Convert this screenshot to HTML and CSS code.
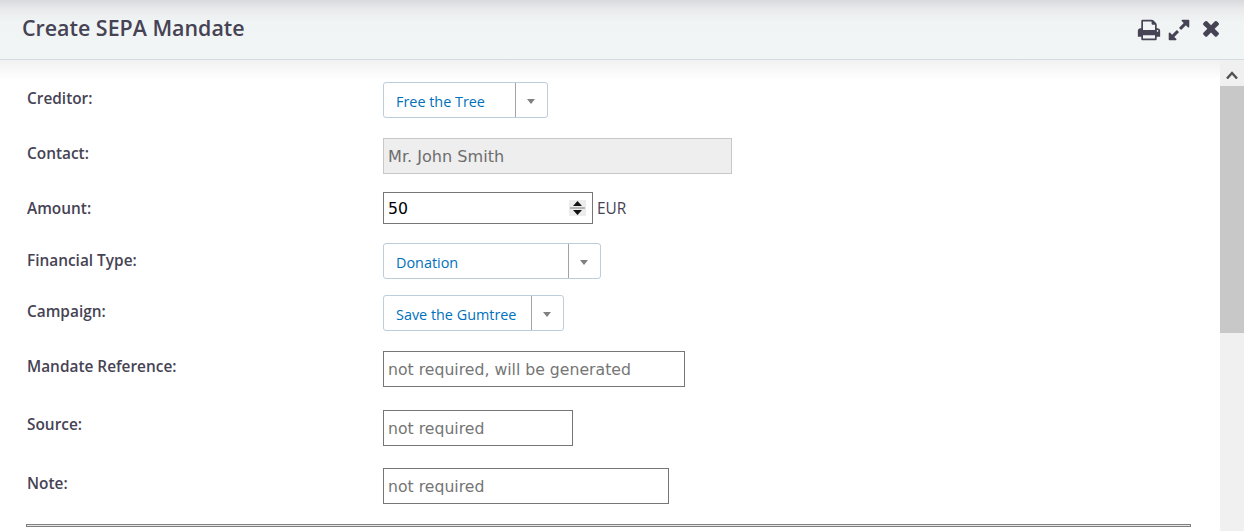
FILE: index.html
```html
<!DOCTYPE html>
<html lang="en">

<head>
    <title>Create SEPA Mandate</title>
    <meta charset="UTF-8">
    <link rel="stylesheet" href="styles.css">
</head>

<body>
    <header class="dialog-header">
        <h1>Create SEPA Mandate</h1>
        <div class="dialog-icons">
            <svg class="icon-print" viewBox="0 0 1792 1792"><path d="M448 1536h896v-256h-896v256zm0-640h896v-384h-160q-40 0-68-28t-28-68v-160h-640v640zm1152 64q0-26-19-45t-45-19-45 19-19 45 19 45 45 19 45-19 19-45zm128 0v416q0 13-9.500 22.500t-22.500 9.500h-224v160q0 40-28 68t-68 28h-960q-40 0-68-28t-28-68v-160h-224q-13 0-22.500-9.500t-9.500-22.500v-416q0-79 56.500-135.500t135.500-56.500h64v-544q0-40 28-68t68-28h672q40 0 88 20t76 48l152 152q28 28 48 76t20 88v256h64q79 0 135.500 56.500t56.500 135.500z"/></svg>
            <svg class="icon-expand" viewBox="0 0 1792 1792"><path d="M883 1056q0 13-10 23l-332 332 144 144q19 19 19 45t-19 45-45 19h-448q-26 0-45-19t-19-45v-448q0-26 19-45t45-19 45 19l144 144 332-332q10-10 23-10t23 10l114 114q10 10 10 23zm781-864v448q0 26-19 45t-45 19-45-19l-144-144-332 332q-10 10-23 10t-23-10l-114-114q-10-10-10-23t10-23l332-332-144-144q-19-19-19-45t19-45 45-19h448q26 0 45 19t19 45z"/></svg>
            <svg class="icon-close" viewBox="0 0 1792 1792"><path d="M1490 1322q0 40-28 68l-136 136q-28 28-68 28t-68-28l-294-294-294 294q-28 28-68 28t-68-28l-136-136q-28-28-28-68t28-68l294-294-294-294q-28-28-28-68t28-68l136-136q28-28 68-28t68 28l294 294 294-294q28-28 68-28t68 28l136 136q28 28 28 68t-28 68l-294 294 294 294q28 28 28 68z"/></svg>
        </div>
    </header>

    <main class="dialog-body">
        <form class="mandate-form">
            <div class="row row-creditor">
                <label>Creditor:</label>
                <div class="select select-creditor"><span>Free the Tree</span><b></b></div>
            </div>
            <div class="row row-contact">
                <label>Contact:</label>
                <input class="text-input input-contact" type="text" value="Mr. John Smith" disabled>
            </div>
            <div class="row row-amount">
                <label>Amount:</label>
                <div class="amount-box">
                    <input class="text-input input-amount" type="number" value="50">
                    <svg class="spinner" viewBox="0 0 17 16">
                        <rect width="17" height="16" fill="#ececec"/>
                        <rect x="1" y="7" width="15" height="2" fill="#b4b4b4"/>
                        <path d="M8.500 1 L13 6 H4 Z M8.500 15 L13 10 H4 Z" fill="#111111"/>
                    </svg>
                </div>
                <span class="currency">EUR</span>
            </div>
            <div class="row row-type">
                <label>Financial Type:</label>
                <div class="select select-type"><span>Donation</span><b></b></div>
            </div>
            <div class="row row-campaign">
                <label>Campaign:</label>
                <div class="select select-campaign"><span>Save the Gumtree</span><b></b></div>
            </div>
            <div class="row row-reference">
                <label>Mandate Reference:</label>
                <input class="text-input input-reference" type="text" placeholder="not required, will be generated">
            </div>
            <div class="row row-source">
                <label>Source:</label>
                <input class="text-input input-source" type="text" placeholder="not required">
            </div>
            <div class="row row-note">
                <label>Note:</label>
                <input class="text-input input-note" type="text" placeholder="not required">
            </div>
            <hr class="divider">
        </form>

        <div class="scrollbar">
            <div class="scroll-up">
                <svg viewBox="0 0 12 8"><path d="M1 7.500 L6 2 L11 7.500" fill="none" stroke="#505050" stroke-width="2.400"/></svg>
            </div>
            <div class="scroll-thumb"></div>
        </div>
    </main>
</body>

</html>
```

FILE: styles.css
```css
* {
    box-sizing: border-box;
}

html,
body {
    height: 100%;
}

body {
    margin: 0;
    overflow: hidden;
    display: flex;
    flex-direction: column;
    font-family: "Open Sans", Arial, sans-serif;
    font-size: 15.4px;
    color: #464354;
    background-color: white;
}

.dialog-header {
    height: 60px;
    flex: none;
    display: flex;
    justify-content: space-between;
    padding: 14px 21px 0 22px;
    border-bottom: 1px solid #d3dae0;
    background: linear-gradient(#d9dadd, #e9ebed 10px, #f1f4f5 22px, #f2f5f6);
}

.dialog-header h1 {
    margin: 0;
    font-size: 21.4px;
    line-height: 28px;
    font-weight: 600;
}

.dialog-icons {
    display: flex;
    fill: #464354;
}

.dialog-icons svg {
    display: block;
}

.icon-print {
    width: 24px;
    height: 24px;
    margin-top: 4px;
}

.icon-expand {
    width: 24px;
    height: 24px;
    margin: 4px 0 0 6px;
}

.icon-close {
    width: 24px;
    height: 24px;
    margin: 2px 0 0 8px;
}

.dialog-body {
    flex: 1;
    min-height: 0;
    display: flex;
    background: linear-gradient(#f1f1f1, white 20px);
}

.mandate-form {
    flex: 1;
    padding: 22px 29px 0 26px;
}

.row {
    display: flex;
}

.row label {
    width: 357px;
    flex: none;
    padding-left: 1px;
    font-weight: 600;
    line-height: 20px;
}

.row-contact {
    margin-top: 20px;
}

.row-amount {
    margin-top: 18px;
}

.row-type {
    margin-top: 19px;
}

.row-campaign {
    margin-top: 16px;
}

.row-reference {
    margin-top: 20px;
}

.row-source {
    margin-top: 23px;
}

.row-note {
    margin-top: 22px;
}

.row-creditor label,
.row-amount label,
.row-campaign label {
    padding-top: 7px;
}

.row-contact label,
.row-reference label,
.row-note label {
    padding-top: 6px;
}

.row-source label {
    padding-top: 5px;
}

.row-type label {
    padding-top: 8px;
}

.select {
    height: 36px;
    display: flex;
    border: 1px solid #bccddc;
    border-radius: 3px;
    font-size: 14.4px;
    color: #0071bd;
    background-color: white;
    line-height: 37px;
}

.select span {
    flex: 1;
    padding-left: 12px;
    border-right: 1px solid #a0a4a8;
}

.select b {
    width: 31px;
    flex: none;
    position: relative;
}

.select b::after {
    content: "";
    position: absolute;
    left: 11px;
    top: 16px;
    border-style: solid;
    border-width: 5px 4px 0;
    border-color: #808080 transparent transparent;
}

.select-creditor {
    width: 165px;
}

.select-type {
    width: 218px;
}

.select-campaign {
    width: 181px;
}

.text-input {
    height: 36px;
    padding: 0 4px;
    border: 1px solid #767676;
    border-radius: 0;
    outline: none;
    font-family: "DejaVu Sans", Verdana, sans-serif;
    font-size: 15.7px;
    color: black;
    background-color: white;
}

.text-input::placeholder {
    color: #757575;
}

.input-contact {
    width: 349px;
    border-color: #c8c8c8;
    font-size: 16.1px;
    color: #6d6d6d;
    background-color: #eeeeee;
}

.amount-box {
    position: relative;
    width: 210px;
    height: 32px;
}

.input-amount {
    width: 100%;
    height: 32px;
    appearance: textfield;
}

.input-amount::-webkit-inner-spin-button {
    display: none;
}

.spinner {
    position: absolute;
    left: 186px;
    top: 8px;
    width: 17px;
    height: 16px;
}

.currency {
    height: 32px;
    margin-left: 4px;
    line-height: 34px;
}

.input-reference {
    width: 302px;
}

.input-source {
    width: 190px;
}

.input-note {
    width: 286px;
}

.divider {
    height: 3px;
    margin: 20px 0 0;
    border: 1px solid #808080;
    background-color: #e8e8e8;
}

.scrollbar {
    width: 24px;
    flex: none;
    background-color: #f0f0f0;
}

.scroll-up {
    height: 26px;
    padding-top: 3px;
    display: flex;
    align-items: center;
    justify-content: center;
}

.scroll-up svg {
    width: 12px;
    height: 8px;
}

.scroll-thumb {
    height: 247px;
    background-color: #c8c8c8;
}
```
